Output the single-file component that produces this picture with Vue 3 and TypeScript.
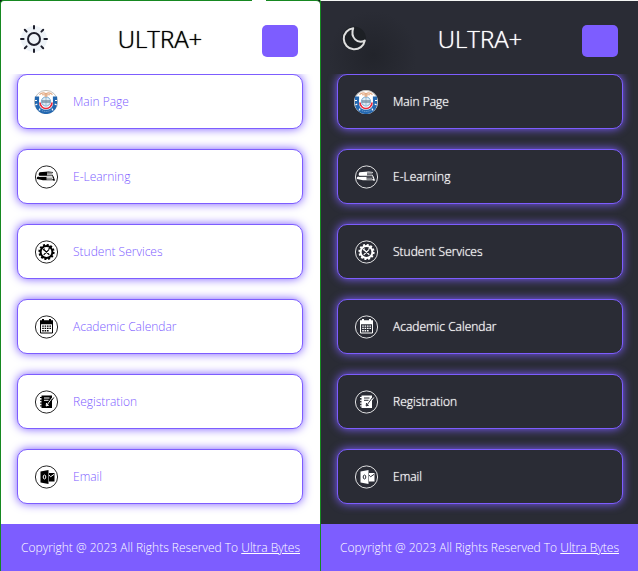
<script setup lang="ts">
type Theme = 'light' | 'dark'
type IconName = 'emblem' | 'books' | 'gear' | 'calendar' | 'notebook' | 'mail'

const themes: Theme[] = ['light', 'dark']
const links: { label: string; icon: IconName }[] = [
  { label: 'Main Page', icon: 'emblem' },
  { label: 'E-Learning', icon: 'books' },
  { label: 'Student Services', icon: 'gear' },
  { label: 'Academic Calendar', icon: 'calendar' },
  { label: 'Registration', icon: 'notebook' },
  { label: 'Email', icon: 'mail' },
]
</script>

<template>
  <div class="popups">
    <section v-for="theme in themes" :key="theme" class="panel" :class="theme">
      <span v-if="theme === 'light'" class="pointer"></span>
      <header class="header">
        <button class="toggle" type="button" aria-label="Switch theme">
          <svg v-if="theme === 'light'" viewBox="0 0 28 28" class="sun">
            <circle cx="14" cy="14" r="13" class="halo" />
            <g class="line">
              <circle cx="14" cy="14" r="6" />
              <path d="M14 1v2.6M14 24.4V27M1 14h2.6M24.4 14H27M4.8 4.8l1.8 1.8M21.4 21.4l1.8 1.8M4.8 23.2l1.8-1.8M21.4 6.6l1.8-1.8" />
            </g>
          </svg>
          <svg v-else viewBox="0 0 28 28" class="moon">
            <circle cx="14" cy="13.5" r="12" class="halo" />
            <path class="line" d="M13.2 3.2A10.6 10.6 0 1 0 24.8 15.6C17.6 19.5 10 12.5 13.2 3.2Z" />
          </svg>
        </button>
        <h1 class="title">ULTRA+</h1>
        <button class="menu" type="button" aria-label="Menu"></button>
      </header>

      <nav class="list">
        <a v-for="link in links" :key="link.label" class="item" href="#">
          <svg v-if="link.icon === 'emblem'" class="icon" viewBox="0 0 24 24">
            <circle cx="12" cy="12" r="12" fill="#fff" />
            <circle cx="12" cy="12" r="11.6" fill="none" stroke="#aaa69f" stroke-width=".7" />
            <path d="M3 6.5V15A9.3 9.3 0 0 0 21 15V6.5" fill="none" stroke="#2468b0" stroke-width="4.2" />
            <path d="M1 10.5h2M1.3 15l2-1M21 10.5h2M20.7 14l2 1M5 20.5l1-2M19 20.5l-1-2" stroke="#fff" stroke-width="1.1" />
            <path d="M6 19.5q6 4 12 0" fill="none" stroke="#c9dcee" stroke-width=".6" stroke-dasharray="1 1" />
            <circle cx="12" cy="11.5" r="6.7" fill="#fff" />
            <path d="M6 12.5a6 6 0 0 0 12 0" fill="none" stroke="#e8293b" stroke-width="1.7" />
            <circle cx="12" cy="11.5" r="4.6" fill="#d9eaf6" stroke="#468dc2" stroke-width=".7" />
            <path d="M8 10.5h8v2H8zM12 7v8" fill="#8ba5b8" stroke="#708da3" stroke-width=".5" />
            <path d="M5.5 4.7q3-3 6.5-1 3.5-2 6.5 1M8 4.8h8M12 3v4M10.5 6h3" fill="none" stroke="#e2a981" stroke-width="1.1" />
          </svg>
          <svg v-else class="icon" viewBox="0 0 24 24">
            <circle cx="12.5" cy="12" r="11.1" class="ring" />
            <template v-if="link.icon === 'books'">
              <path class="solid" d="M5.5 7.3l9-.7 4.500.5v4L8 11.500 5 10.800q-1-1.700.5-3.500Z" />
              <path class="solid" d="M3.500 11.800l9-.5 7.500.3v1.200l1 2.400-1 .8-1-.8H9l-6-1.200q-.8-1.200.5-2.200Z" />
              <path class="cut" d="M13 8.100h5.700v1.700H13M12.500 12.700h6.200v1.300h-6.200M5 11.300h13" />
            </template>
            <template v-else-if="link.icon === 'gear'">
              <circle class="teeth" cx="12.5" cy="12" r="7.100" />
              <circle class="gear" cx="12.5" cy="12" r="5.900" />
              <path class="tool" d="M9.700 14.800l5.500-5.500M9.700 9.500l5.600 5.300M9 10.200l1.600-1.600M14.500 8.800l1.300-.4" />
            </template>
            <template v-else-if="link.icon === 'calendar'">
              <path class="solid" d="M6 5.200h13v4H6zM8 4h2v3H8zM15 4h2v3h-2z" />
              <path class="outline" d="M6.500 9v9h12V9" />
              <path class="grid" d="M8.200 11.100H17M8.200 13.400H17M8.200 15.700h6.400" />
            </template>
            <template v-else-if="link.icon === 'notebook'">
              <path class="solid" d="M7.500 5.500H18V18H7.500z" />
              <path class="outline" d="M6 7.500h2M6 10.300h2M6 13.100h2M6 15.900h2" />
              <path class="cut" d="M10 8h5.500M10 10.300h4.500M12.800 15.300l6-8.300M12.500 13l-.3 3 2.800-1" />
              <path class="outline" d="M14.500 14.800l5.300-7.300" />
            </template>
            <template v-else>
              <path class="solid" d="M6.500 6.500l8-1.500v14l-8-1.500z" />
              <path class="solid" d="M15 8h5.500v8.500H15z" />
              <ellipse class="cut" cx="10.500" cy="12" rx="1.300" ry="2" />
              <path class="cut" d="M15 10.200l1.700 1.500 3.300-2.300" />
            </template>
          </svg>
          <span>{{ link.label }}</span>
        </a>
      </nav>

      <footer class="footer">
        <p>Copyright @ 2023 All Rights Reserved To <a href="#">Ultra Bytes</a></p>
      </footer>
    </section>
  </div>
</template>

<style>
body {
  margin: 0;
  background: #111b18;
}
</style>

<style scoped>
.popups {
  display: grid;
  grid-template-columns: 320fr 318fr;
  min-height: 100vh;
  font-family: 'Open Sans', 'Noto Sans', sans-serif;
  font-weight: 300;
}

.panel {
  --accent: #7d5dff;
  position: relative;
  box-sizing: border-box;
  display: flex;
  flex-direction: column;
  border-left: 1px solid #168821;
  border-top: 1px solid #168821;
  background: var(--surface);
}

.light {
  --surface: #ffffff;
  --ink: #000000;
  --label: #7d5dff;
  --halo: #eef3f8;
  --line: #1d1e2b;
  border-top-left-radius: 4px;
  border-top-right-radius: 4px;
}

.dark {
  --surface: #2a2c35;
  --ink: #ffffff;
  --label: #ffffff;
  --halo: #1d2025;
  --line: #dedede;
  border-top-color: #f4f6f4;
  background: radial-gradient(circle at 52px 54px, #22242b 0, #2a2c35 44px);
}

.pointer {
  position: absolute;
  top: -1px;
  right: 54px;
  width: 14px;
  height: 1px;
  background: #ffffff;
}

.header {
  display: grid;
  grid-template-columns: 38px 1fr 36px;
  align-items: start;
  box-sizing: border-box;
  height: 73px;
  max-width: 317px;
  padding: 24px 20px 0 19px;
}

.toggle {
  display: flex;
  width: 28px;
  height: 28px;
  padding: 0;
  border: 0;
  background: none;
  cursor: pointer;
}

.toggle svg {
  width: 28px;
  height: 28px;
}

.halo {
  fill: var(--halo);
}

.line {
  fill: none;
  stroke: var(--line);
  stroke-width: 2;
  stroke-linecap: round;
  stroke-linejoin: round;
}

.title {
  margin: 0;
  color: var(--ink);
  font-size: 24px;
  font-weight: 300;
  line-height: 28px;
  text-align: center;
  text-shadow: 0 0 1px var(--ink);
}

.menu {
  width: 36px;
  height: 32px;
  padding: 0;
  border: 0;
  border-radius: 5px;
  background: var(--accent);
  cursor: pointer;
}

.list {
  display: grid;
  grid-template-columns: minmax(0, 286px);
  gap: 20px;
  padding: 0 15px 20px 16px;
  overflow: hidden;
}

.item {
  display: flex;
  align-items: center;
  gap: 15px;
  box-sizing: border-box;
  height: 55px;
  padding: 0 16px;
  border: 1px solid var(--accent);
  border-radius: 10px;
  background: var(--surface);
  box-shadow: 0 0 10px var(--accent);
  color: var(--label);
  font-size: 12px;
  line-height: 16px;
  text-decoration: none;
}

.dark .item span {
  text-shadow: 0 0 1px var(--label);
}

.icon {
  flex: none;
  width: 24px;
  height: 24px;
}

.ring,
.outline,
.teeth,
.gear,
.tool,
.grid {
  fill: none;
  stroke: var(--ink);
  stroke-width: 1;
}

.ring {
  opacity: 0.85;
}

.solid {
  fill: var(--ink);
}

.cut {
  fill: none;
  stroke: var(--surface);
  stroke-width: 1;
}

.teeth {
  stroke-width: 2;
  stroke-dasharray: 2 1.717;
}

.gear {
  stroke-width: 2;
}

.tool {
  stroke-width: 1.2;
}

.grid {
  stroke-width: 1.4;
  stroke-dasharray: 1.6 0.8;
}

.footer {
  flex: 1;
  display: flex;
  align-items: center;
  justify-content: center;
  min-height: 47px;
  background: var(--accent);
  color: #ffffff;
  font-size: 12px;
  line-height: 16px;
}

.footer p {
  margin: 0;
}

.footer a {
  color: inherit;
}
</style>
